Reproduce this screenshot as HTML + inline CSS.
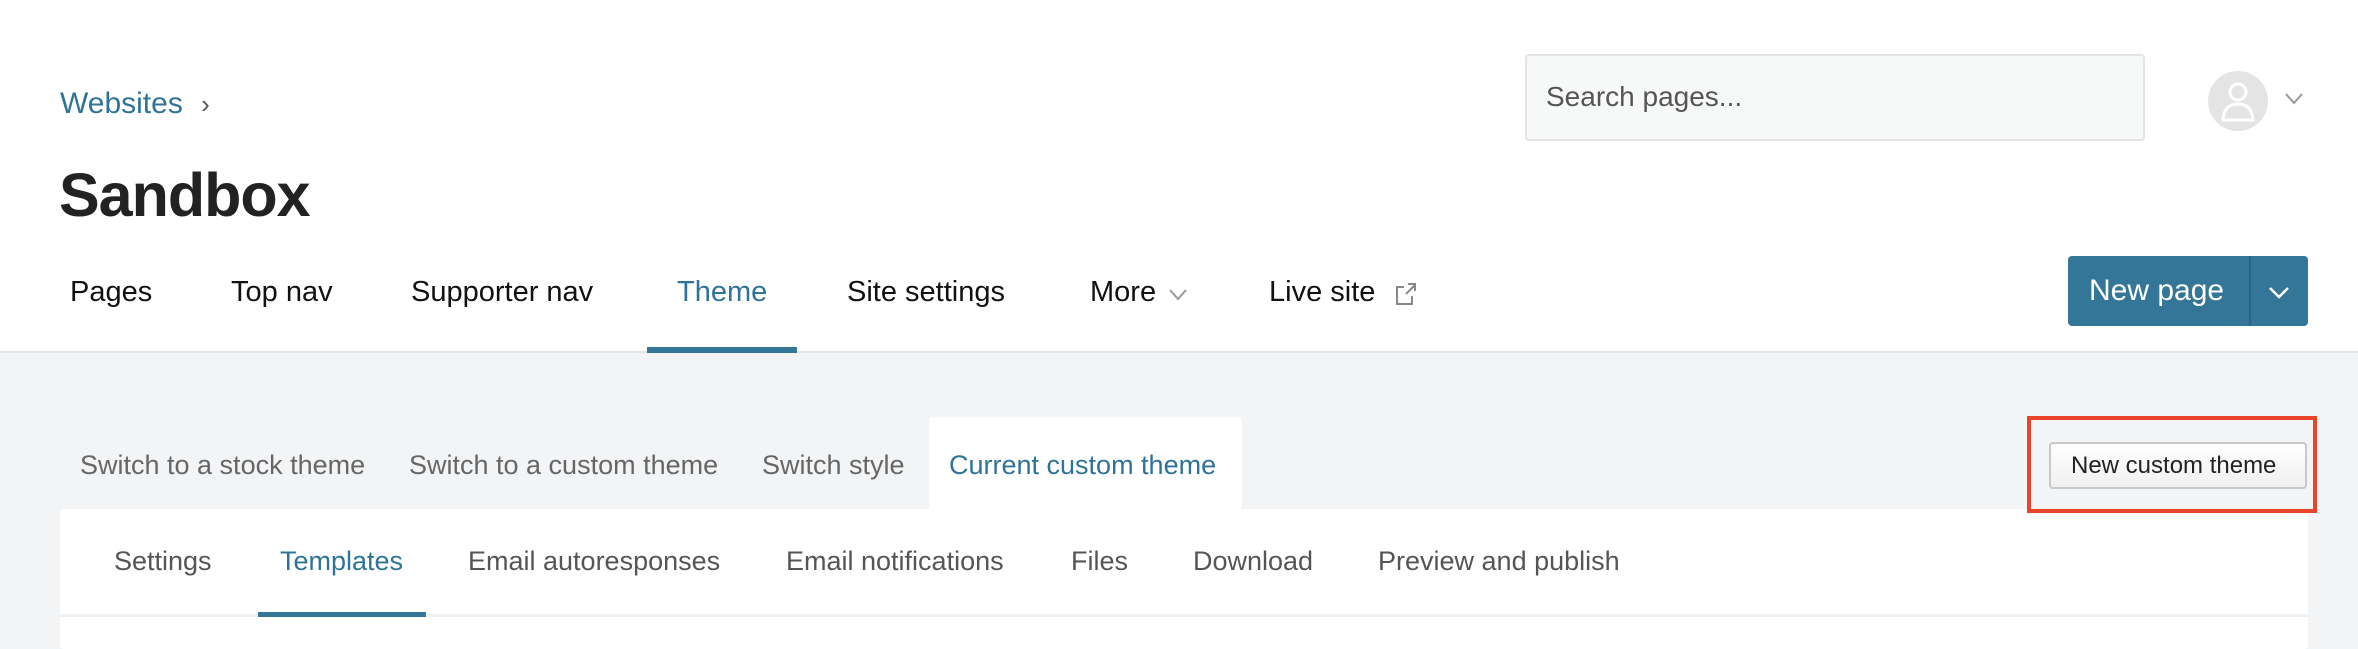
<!DOCTYPE html>
<html><head><style>
*{margin:0;padding:0;box-sizing:border-box}
body{width:2358px;height:638px;overflow:hidden;background:#f3f4f6;font-family:"Liberation Sans",sans-serif;position:relative}
.a{position:absolute;white-space:nowrap}
#hdr{position:absolute;left:0;top:0;width:2358px;height:353px;background:#fff;border-bottom:2px solid #e3e4e6}
.nav{font-size:29px;color:#111;top:276px}
.st{font-size:27px;color:#666;top:450px}
.it{font-size:27px;color:#555;top:546px}
</style></head><body>
<div id="hdr"></div>
<div class="a" style="left:60px;top:87px;font-size:30px;color:#2f7396">Websites <span style="color:#555;font-size:26px;margin-left:10px">&#x203A;</span></div>
<div class="a" style="left:59px;top:160px;font-size:61px;font-weight:bold;color:#222;letter-spacing:-1px">Sandbox</div>
<div class="a" style="left:1525px;top:54px;width:620px;height:87px;background:#f7f8f8;border:2px solid #e3e4e4;border-radius:4px"></div>
<div class="a" style="left:1546px;top:81px;font-size:28px;color:#555">Search pages...</div>
<svg class="a" style="left:2207px;top:70px" width="62" height="62" viewBox="0 0 62 62"><circle cx="31" cy="31" r="30" fill="#e4e4e4"/><circle cx="31" cy="22" r="8" fill="none" stroke="#fff" stroke-width="3"/><path d="M16 50 Q17 34 31 34 Q45 34 46 50 Z" fill="none" stroke="#fff" stroke-width="3"/></svg>
<svg class="a" style="left:2284px;top:92px" width="20" height="14"><path d="M2 2 L10 11 L18 2" fill="none" stroke="#999" stroke-width="2"/></svg>
<div class="a nav" style="left:70px">Pages</div>
<div class="a nav" style="left:231px">Top nav</div>
<div class="a nav" style="left:411px">Supporter nav</div>
<div class="a nav" style="left:677px;color:#2f7396">Theme</div>
<div class="a nav" style="left:847px">Site settings</div>
<div class="a nav" style="left:1090px">More</div>
<svg class="a" style="left:1168px;top:288px" width="20" height="14"><path d="M2 2 L10 11 L18 2" fill="none" stroke="#999" stroke-width="2"/></svg>
<div class="a nav" style="left:1269px">Live site</div>
<svg class="a" style="left:1395px;top:282px" width="22" height="24"><path d="M9 5 H2 V22 H17 V14 M11 12 L20 3 M13 2 H20 V9" fill="none" stroke="#888" stroke-width="2"/></svg>
<div class="a" style="left:647px;top:347px;width:150px;height:6px;background:#347698"></div>
<div class="a" style="left:2068px;top:256px;width:240px;height:70px;background:#347698;border-radius:4px"></div>
<div class="a" style="left:2249px;top:256px;width:2px;height:70px;background:#2c6583"></div>
<div class="a" style="left:2089px;top:274px;font-size:30px;color:#fff">New page</div>
<svg class="a" style="left:2268px;top:286px" width="22" height="14"><path d="M2 2 L11 11 L20 2" fill="none" stroke="#fff" stroke-width="2.5"/></svg>
<div class="a" style="left:929px;top:417px;width:313px;height:95px;background:#fff;border-radius:4px 4px 0 0"></div>
<div class="a st" style="left:80px">Switch to a stock theme</div>
<div class="a st" style="left:409px">Switch to a custom theme</div>
<div class="a st" style="left:762px">Switch style</div>
<div class="a st" style="left:949px;color:#2f7396">Current custom theme</div>
<div class="a" style="left:60px;top:509px;width:2248px;height:140px;background:#fff;border-radius:4px"></div>
<div class="a" style="left:60px;top:614px;width:2248px;height:3px;background:#f0f1f2"></div>
<div class="a it" style="left:114px">Settings</div>
<div class="a it" style="left:280px;color:#2f7396">Templates</div>
<div class="a it" style="left:468px">Email autoresponses</div>
<div class="a it" style="left:786px">Email notifications</div>
<div class="a it" style="left:1071px">Files</div>
<div class="a it" style="left:1193px">Download</div>
<div class="a it" style="left:1378px">Preview and publish</div>
<div class="a" style="left:258px;top:612px;width:168px;height:5px;background:#347698"></div>
<div class="a" style="left:2049px;top:442px;width:258px;height:47px;background:linear-gradient(#fff,#f0f0f0);border:2px solid #c8c8c8;border-radius:4px"></div>
<div class="a" style="left:2071px;top:452px;font-size:24px;color:#222">New custom theme</div>
<div class="a" style="left:2027px;top:416px;width:290px;height:97px;border:4px solid #e8432b"></div>
</body></html>
